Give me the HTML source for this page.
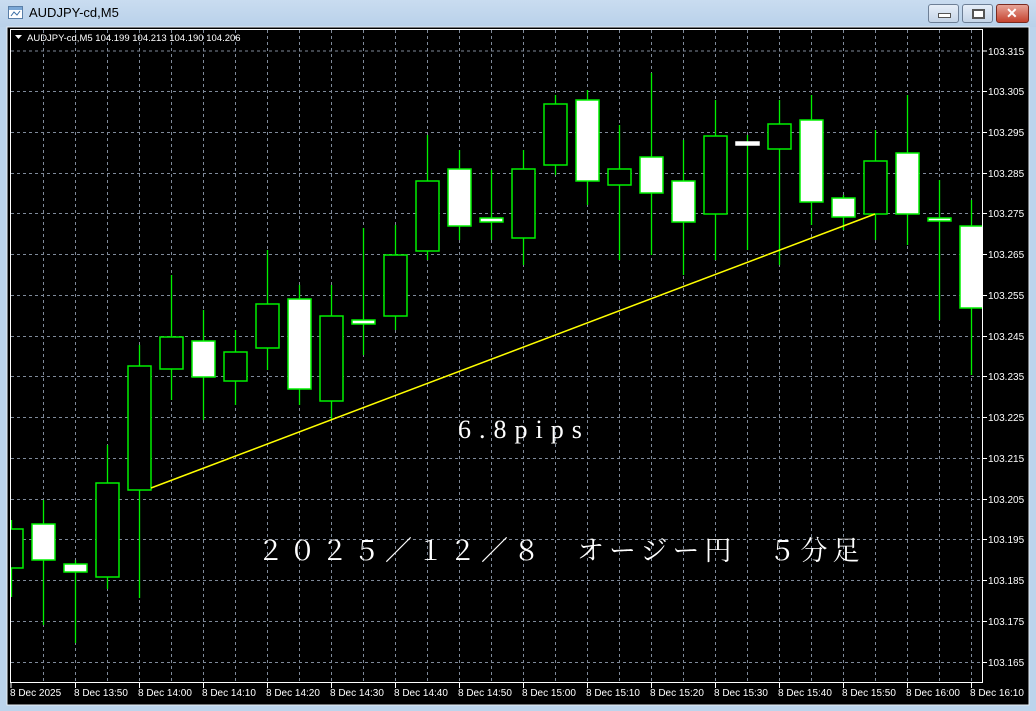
<!DOCTYPE html>
<html><head><meta charset="utf-8"><style>
html,body{margin:0;padding:0;width:1036px;height:711px;overflow:hidden;background:#bcd4ec;font-family:"Liberation Sans",sans-serif}
.title{position:absolute;left:0;top:0;width:1036px;height:27px;background:linear-gradient(#c9dcf0,#b9d1ea)}
.title span{position:absolute;left:29px;top:5px;font-size:13px;color:#000}
.btn{position:absolute;top:4px;height:17px;border:1px solid #6d7f96;border-radius:3px;background:linear-gradient(#e6eef8,#c5d5e8)}
</style></head><body>
<div class="title">
<svg style="position:absolute;left:8px;top:6px" width="16" height="14"><rect x="0.5" y="0.5" width="14" height="12" fill="#fff" stroke="#5a7fa8"/><rect x="1" y="1" width="13" height="3" fill="#7aa7d6"/><path d="M3 10 L6 6 L9 9 L12 5" stroke="#3a6ea5" fill="none"/></svg>
<span>AUDJPY-cd,M5</span>
<div class="btn" style="left:928px;width:29px"><div style="position:absolute;left:9px;top:8px;width:11px;height:3px;background:#fff;border:1px solid #555"></div></div>
<div class="btn" style="left:962px;width:29px"><div style="position:absolute;left:9px;top:4px;width:9px;height:6px;background:#fff;border:2px solid #555"></div></div>
<div class="btn" style="left:996px;width:31px;background:linear-gradient(#e7a497,#c5432f);border-color:#7a2a20"><div style="position:absolute;left:9px;top:0;color:#fff;font-weight:bold;font-size:14px">✕</div></div>
</div>
<svg style="position:absolute;left:0;top:0" width="1036" height="711">
<defs><clipPath id="pc"><rect x="11" y="30" width="971" height="652"/></clipPath></defs>
<rect x="7" y="27" width="1022" height="678" fill="#000" stroke="#e8eef5"/>
<g stroke="#7f8a9a" stroke-dasharray="3,3" stroke-width="1">
<path d="M11 51H982M11 91.5H982M11 132.5H982M11 173.5H982M11 213.5H982M11 254.5H982M11 295.5H982M11 336.5H982M11 376.5H982M11 417.5H982M11 458.5H982M11 499.5H982M11 539.5H982M11 580.5H982M11 621.5H982M11 662.5H982"/>
<path d="M43.5 30V682M75.5 30V682M107.5 30V682M139.5 30V682M171.5 30V682M203.5 30V682M235.5 30V682M267.5 30V682M299.5 30V682M331.5 30V682M363.5 30V682M395.5 30V682M427.5 30V682M459.5 30V682M491.5 30V682M523.5 30V682M555.5 30V682M587.5 30V682M619.5 30V682M651.5 30V682M683.5 30V682M715.5 30V682M747.5 30V682M779.5 30V682M811.5 30V682M843.5 30V682M875.5 30V682M907.5 30V682M939.5 30V682M971.5 30V682"/>
</g>
<g stroke="#fff"><path d="M983 51h4M983 91.5h4M983 132.5h4M983 173.5h4M983 213.5h4M983 254.5h4M983 295.5h4M983 336.5h4M983 376.5h4M983 417.5h4M983 458.5h4M983 499.5h4M983 539.5h4M983 580.5h4M983 621.5h4M983 662.5h4"/>
<path d="M11 683v5M75.5 683v5M139.5 683v5M203.5 683v5M267.5 683v5M331.5 683v5M395.5 683v5M459.5 683v5M523.5 683v5M587.5 683v5M651.5 683v5M715.5 683v5M779.5 683v5M843.5 683v5M907.5 683v5M971.5 683v5"/></g>
<g fill="#fff" font-size="10" font-family="Liberation Sans,sans-serif">
<text x="988" y="55">103.315</text><text x="988" y="95">103.305</text><text x="988" y="136">103.295</text><text x="988" y="177">103.285</text><text x="988" y="217">103.275</text><text x="988" y="258">103.265</text><text x="988" y="299">103.255</text><text x="988" y="340">103.245</text><text x="988" y="380">103.235</text><text x="988" y="421">103.225</text><text x="988" y="462">103.215</text><text x="988" y="503">103.205</text><text x="988" y="543">103.195</text><text x="988" y="584">103.185</text><text x="988" y="625">103.175</text><text x="988" y="666">103.165</text>
<text x="10" y="696">8 Dec 2025</text><text x="74" y="696">8 Dec 13:50</text><text x="138" y="696">8 Dec 14:00</text><text x="202" y="696">8 Dec 14:10</text><text x="266" y="696">8 Dec 14:20</text><text x="330" y="696">8 Dec 14:30</text><text x="394" y="696">8 Dec 14:40</text><text x="458" y="696">8 Dec 14:50</text><text x="522" y="696">8 Dec 15:00</text><text x="586" y="696">8 Dec 15:10</text><text x="650" y="696">8 Dec 15:20</text><text x="714" y="696">8 Dec 15:30</text><text x="778" y="696">8 Dec 15:40</text><text x="842" y="696">8 Dec 15:50</text><text x="906" y="696">8 Dec 16:00</text><text x="970" y="696">8 Dec 16:10</text>
<text x="27" y="41" font-size="9.5">AUDJPY-cd,M5  104.199 104.213 104.190 104.206</text>
</g>
<path d="M15 35h7l-3.5 4z" fill="#fff"/>
<g clip-path="url(#pc)">
<g stroke="#00f000" stroke-width="1.3">
<path d="M11.5 520V597M43.5 500V625M75.5 560V643M107.5 445V589M139.5 345V598M171.5 275V400M203.5 310V420M235.5 330V405M267.5 250V370M299.5 285V405M331.5 285V420M363.5 228V355M395.5 225V330M427.5 135V260M459.5 150V240M491.5 170V240M523.5 150V265M555.5 95V175M587.5 90V205M619.5 125V260M651.5 73V255M683.5 140V275M715.5 100V260M747.5 135V250M779.5 100V265M811.5 95V225M843.5 195V230M875.5 130V240M907.5 95V245M939.5 180V320M971.5 200V375"/>
</g>
<g stroke="#00f000" stroke-width="1.5">
<rect x="0" y="529" width="23" height="39" fill="#000"/>
<rect x="32" y="524" width="23" height="36" fill="#fff"/>
<rect x="64" y="564" width="23" height="8" fill="#fff"/>
<rect x="96" y="483" width="23" height="94" fill="#000"/>
<rect x="128" y="366" width="23" height="124" fill="#000"/>
<rect x="160" y="337" width="23" height="32" fill="#000"/>
<rect x="192" y="341" width="23" height="36" fill="#fff"/>
<rect x="224" y="352" width="23" height="29" fill="#000"/>
<rect x="256" y="304" width="23" height="44" fill="#000"/>
<rect x="288" y="299" width="23" height="90" fill="#fff"/>
<rect x="320" y="316" width="23" height="85" fill="#000"/>
<rect x="352" y="320" width="23" height="4" fill="#fff"/>
<rect x="384" y="255" width="23" height="61" fill="#000"/>
<rect x="416" y="181" width="23" height="70" fill="#000"/>
<rect x="448" y="169" width="23" height="57" fill="#fff"/>
<rect x="480" y="218" width="23" height="4" fill="#fff"/>
<rect x="512" y="169" width="23" height="69" fill="#000"/>
<rect x="544" y="104" width="23" height="61" fill="#000"/>
<rect x="576" y="100" width="23" height="81" fill="#fff"/>
<rect x="608" y="169" width="23" height="16" fill="#000"/>
<rect x="640" y="157" width="23" height="36" fill="#fff"/>
<rect x="672" y="181" width="23" height="41" fill="#fff"/>
<rect x="704" y="136" width="23" height="78" fill="#000"/>
<rect x="736" y="142" width="23" height="3" fill="#fff" stroke="#fff"/>
<rect x="768" y="124" width="23" height="25" fill="#000"/>
<rect x="800" y="120" width="23" height="82" fill="#fff"/>
<rect x="832" y="198" width="23" height="19" fill="#fff"/>
<rect x="864" y="161" width="23" height="53" fill="#000"/>
<rect x="896" y="153" width="23" height="61" fill="#fff"/>
<rect x="928" y="218" width="23" height="3" fill="#fff"/>
<rect x="960" y="226" width="23" height="82" fill="#fff"/>
</g>
</g>
<rect x="10.5" y="29.5" width="972" height="653" fill="none" stroke="#fff"/>
<line x1="151" y1="488" x2="875" y2="214" stroke="#ffff00" stroke-width="1.5"/>
<g fill="#fff" font-family="Liberation Serif,Noto Serif CJK SC,serif">
<text x="458" y="438" font-size="26" letter-spacing="8">6.8pips</text>
<text x="257" y="560" font-size="27" letter-spacing="5" font-family="Noto Serif CJK SC,serif">２０２５／１２／８　オージー円　５分足</text>
</g>
</svg>
</body></html>
